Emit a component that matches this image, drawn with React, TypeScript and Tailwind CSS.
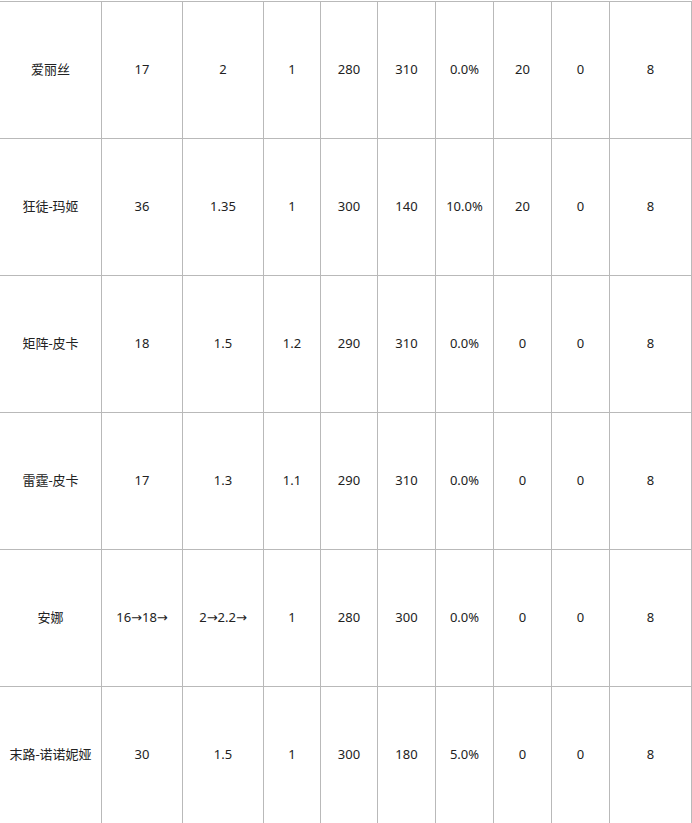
import React from "react";

const rows: string[][] = [
  ["爱丽丝", "17", "2", "1", "280", "310", "0.0%", "20", "0", "8"],
  ["狂徒-玛姬", "36", "1.35", "1", "300", "140", "10.0%", "20", "0", "8"],
  ["矩阵-皮卡", "18", "1.5", "1.2", "290", "310", "0.0%", "0", "0", "8"],
  ["雷霆-皮卡", "17", "1.3", "1.1", "290", "310", "0.0%", "0", "0", "8"],
  ["安娜", "16→18→", "2→2.2→", "1", "280", "300", "0.0%", "0", "0", "8"],
  ["末路-诺诺妮娅", "30", "1.5", "1", "300", "180", "5.0%", "0", "0", "8"],
];

export default function App() {
  return (
    <div className="w-[692px] h-[823px] overflow-hidden bg-white">
      <div
        className="mt-px border-t border-[#b9b9b9] text-[13px] text-[#222]"
        style={{ fontFamily: '"Noto Sans", "DejaVu Sans", "Noto Sans CJK SC", sans-serif' }}
      >
        {rows.map((r, i) => (
          <div
            key={i}
            className="grid grid-cols-[102px_81px_81px_57px_57px_58px_58px_58px_58px_82px] h-[137px] border-b border-[#b9b9b9]"
          >
            {r.map((c, j) => (
              <div
                key={j}
                className="flex items-center justify-center border-r border-[#b9b9b9] whitespace-nowrap"
              >
                {c}
              </div>
            ))}
          </div>
        ))}
      </div>
    </div>
  );
}
